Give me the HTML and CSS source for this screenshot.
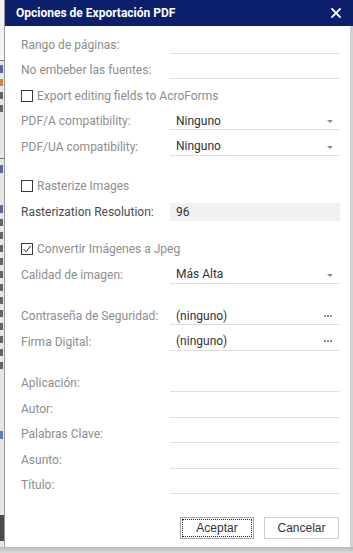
FILE: index.html
```html
<!DOCTYPE html>
<html lang="es">
<head>
<meta charset="utf-8">
<title>Opciones de Exportación PDF</title>
<link rel="stylesheet" href="styles.css">
</head>
<body>
<div class="screen">
  <div class="backdrop">
    <div class="bd-top"></div>
    <div class="bd-lines">
      <span class="frag line"></span>
      <span class="frag orange"></span>
      <span class="frag"></span>
      <span class="frag"></span>
      <span class="gap"></span>
      <span class="frag line"></span>
      <span class="gap2"></span>
      <span class="frag line"></span>
      <span class="frag"></span>
      <span class="frag"></span>
      <span class="frag"></span>
      <span class="frag"></span>
      <span class="frag"></span>
      <span class="frag"></span>
      <span class="frag"></span>
      <span class="frag"></span>
      <span class="frag"></span>
      <span class="frag"></span>
      <span class="frag"></span>
      <span class="frag"></span>
      <span class="gap3"></span>
      <span class="frag line blue"></span>
    </div>
    <div class="bd-dark"></div>
  </div>
  <div class="dialog">
    <div class="titlebar">
      <span class="title">Opciones de Exportación PDF</span>
      <svg class="close" width="10" height="10" viewBox="0 0 10 10"><path d="M1 1L9 9M9 1L1 9" stroke="#fff" stroke-width="1.8" stroke-linecap="square"/></svg>
    </div>
    <div class="body">
      <div class="section s-a">
        <div class="row"><span class="label">Rango de páginas:</span><div class="field"></div></div>
        <div class="row"><span class="label">No embeber las fuentes:</span><div class="field"></div></div>
        <div class="row check-row"><span class="box"></span><span class="label">Export editing fields to AcroForms</span></div>
        <div class="row"><span class="label">PDF/A compatibility:</span><div class="field select"><span>Ninguno</span><span class="arrow"></span></div></div>
        <div class="row"><span class="label">PDF/UA compatibility:</span><div class="field select"><span>Ninguno</span><span class="arrow"></span></div></div>
      </div>
      <div class="section s-b">
        <div class="row check-row"><span class="box"></span><span class="label">Rasterize Images</span></div>
        <div class="row"><span class="label dark">Rasterization Resolution:</span><div class="field filled"><span>96</span></div></div>
      </div>
      <div class="section s-c">
        <div class="row check-row"><span class="box checked"><svg width="10" height="10" viewBox="0 0 10 10"><path d="M1.5 5.2L4 7.8L8.8 1.8" fill="none" stroke="#333" stroke-width="1"/></svg></span><span class="label">Convertir Imágenes a Jpeg</span></div>
        <div class="row"><span class="label">Calidad de imagen:</span><div class="field select"><span>Más Alta</span><span class="arrow"></span></div></div>
      </div>
      <div class="section s-d">
        <div class="row"><span class="label">Contraseña de Seguridad:</span><div class="field select"><span>(ninguno)</span><span class="dots"><i></i><i></i><i></i></span></div></div>
        <div class="row"><span class="label">Firma Digital:</span><div class="field select"><span>(ninguno)</span><span class="dots"><i></i><i></i><i></i></span></div></div>
      </div>
      <div class="section s-e">
        <div class="row"><span class="label">Aplicación:</span><div class="field"></div></div>
        <div class="row"><span class="label">Autor:</span><div class="field"></div></div>
        <div class="row"><span class="label">Palabras Clave:</span><div class="field"></div></div>
        <div class="row"><span class="label">Asunto:</span><div class="field"></div></div>
        <div class="row"><span class="label">Título:</span><div class="field"></div></div>
      </div>
      <div class="buttons">
        <button class="btn primary"><span class="focus">Aceptar</span></button>
        <button class="btn">Cancelar</button>
      </div>
    </div>
  </div>
</div>
<div class="shadow"></div>
</body>
</html>
```
FILE: styles.css
```css
html, body {
  margin: 0;
  padding: 0;
  background: #d2d2d2;
  overflow: hidden;
}
body {
  width: 353px;
  height: 553px;
  font-family: Roboto, "Noto Sans", sans-serif;
}
.screen {
  display: flex;
  height: 547px;
}
.backdrop {
  width: 5px;
  flex: none;
  background: #e6e6e6;
  border-right: 1px solid #9a9a9a;
  box-sizing: border-box;
  display: flex;
  flex-direction: column;
  overflow: hidden;
}
.bd-top {
  height: 60px;
  flex: none;
  background: #f3f3f3;
  border-bottom: 1px solid #777;
}
.bd-lines {
  display: flex;
  flex-direction: column;
  flex: 1;
  overflow: hidden;
  padding-top: 4px;
  gap: 6px;
}
.frag {
  height: 7px;
  flex: none;
  margin-right: 1px;
  background: #3a3a3a;
  opacity: 0.75;
}
.frag.line { border-top: 1px solid #555; background: #2a3a8a; }
.frag.blue { background: #2a5ab0; }
.frag.orange { background: #d06010; }
.gap { height: 40px; flex: none; border-bottom: 1px solid #777; }
.gap2 { height: 20px; flex: none; }
.gap3 { height: 50px; flex: none; }
.bd-dark {
  height: 26px;
  flex: none;
  background: #4a4a4a;
  margin-bottom: 6px;
}
.dialog {
  flex: 1;
  display: flex;
  flex-direction: column;
}
.titlebar {
  height: 26px;
  background: #0b1f6c;
  display: flex;
  align-items: center;
  justify-content: space-between;
  padding: 0 12px 0 11px;
}
.title {
  color: #fff;
  font-weight: bold;
  font-size: 12px;
}
.close { display: block; }
.body {
  flex: 1;
  background: #fff;
  margin-right: 3px;
  padding: 6px 10px 8px 16px;
  display: flex;
  flex-direction: column;
}
.s-b { margin-top: 14px; }
.s-c { margin-top: 12px; }
.s-d { margin-top: 16px; }
.s-e { margin-top: 16px; }
.row {
  height: 25.5px;
  display: grid;
  grid-template-columns: 149px 170px;
  align-items: center;
}
.check-row {
  display: flex;
  align-items: center;
}
.label {
  font-size: 12px;
  color: #8d8d8d;
  white-space: nowrap;
}
.label.dark { color: #4a4a4a; }
.box {
  width: 12px;
  height: 12px;
  box-sizing: border-box;
  border: 1px solid #3a3a3a;
  margin-right: 4px;
  display: flex;
  align-items: center;
  justify-content: center;
}
.box svg { display: block; }
.field {
  height: 18px;
  box-sizing: border-box;
  border-bottom: 1px solid #dedede;
  display: flex;
  align-items: center;
  justify-content: space-between;
  padding: 0 7px 0 6px;
  font-size: 12px;
  color: #333;
}
.field.filled {
  background: #f1f1f1;
  border-bottom: none;
}
.arrow {
  width: 0;
  height: 0;
  border-left: 3.5px solid transparent;
  border-right: 3.5px solid transparent;
  border-top: 3.5px solid #8c8c8c;
  margin-top: 2px;
}
.dots {
  display: flex;
  gap: 1px;
  margin-right: 1px;
}
.dots i {
  width: 2px;
  height: 2px;
  background: #8a8a8a;
}
.buttons {
  margin-top: 19px;
  display: flex;
  justify-content: flex-end;
  gap: 10px;
  padding-right: 1px;
}
.btn {
  width: 75px;
  height: 22px;
  box-sizing: border-box;
  background: #fff;
  border: 1px solid #cfcfcf;
  font-family: "Liberation Sans", Arial, sans-serif;
  font-size: 12px;
  color: #333;
  padding: 0;
  margin: 0;
  display: flex;
  align-items: center;
  justify-content: center;
}
.btn.primary {
  width: 74px;
  border: 1px solid #a8a8a8;
  padding: 1px;
}
.focus {
  flex: 1;
  align-self: stretch;
  display: flex;
  align-items: center;
  justify-content: center;
  border: 1px dotted #222;
}
.shadow {
  height: 6px;
  background: linear-gradient(#b8b8b8, #dadada);
}
```
